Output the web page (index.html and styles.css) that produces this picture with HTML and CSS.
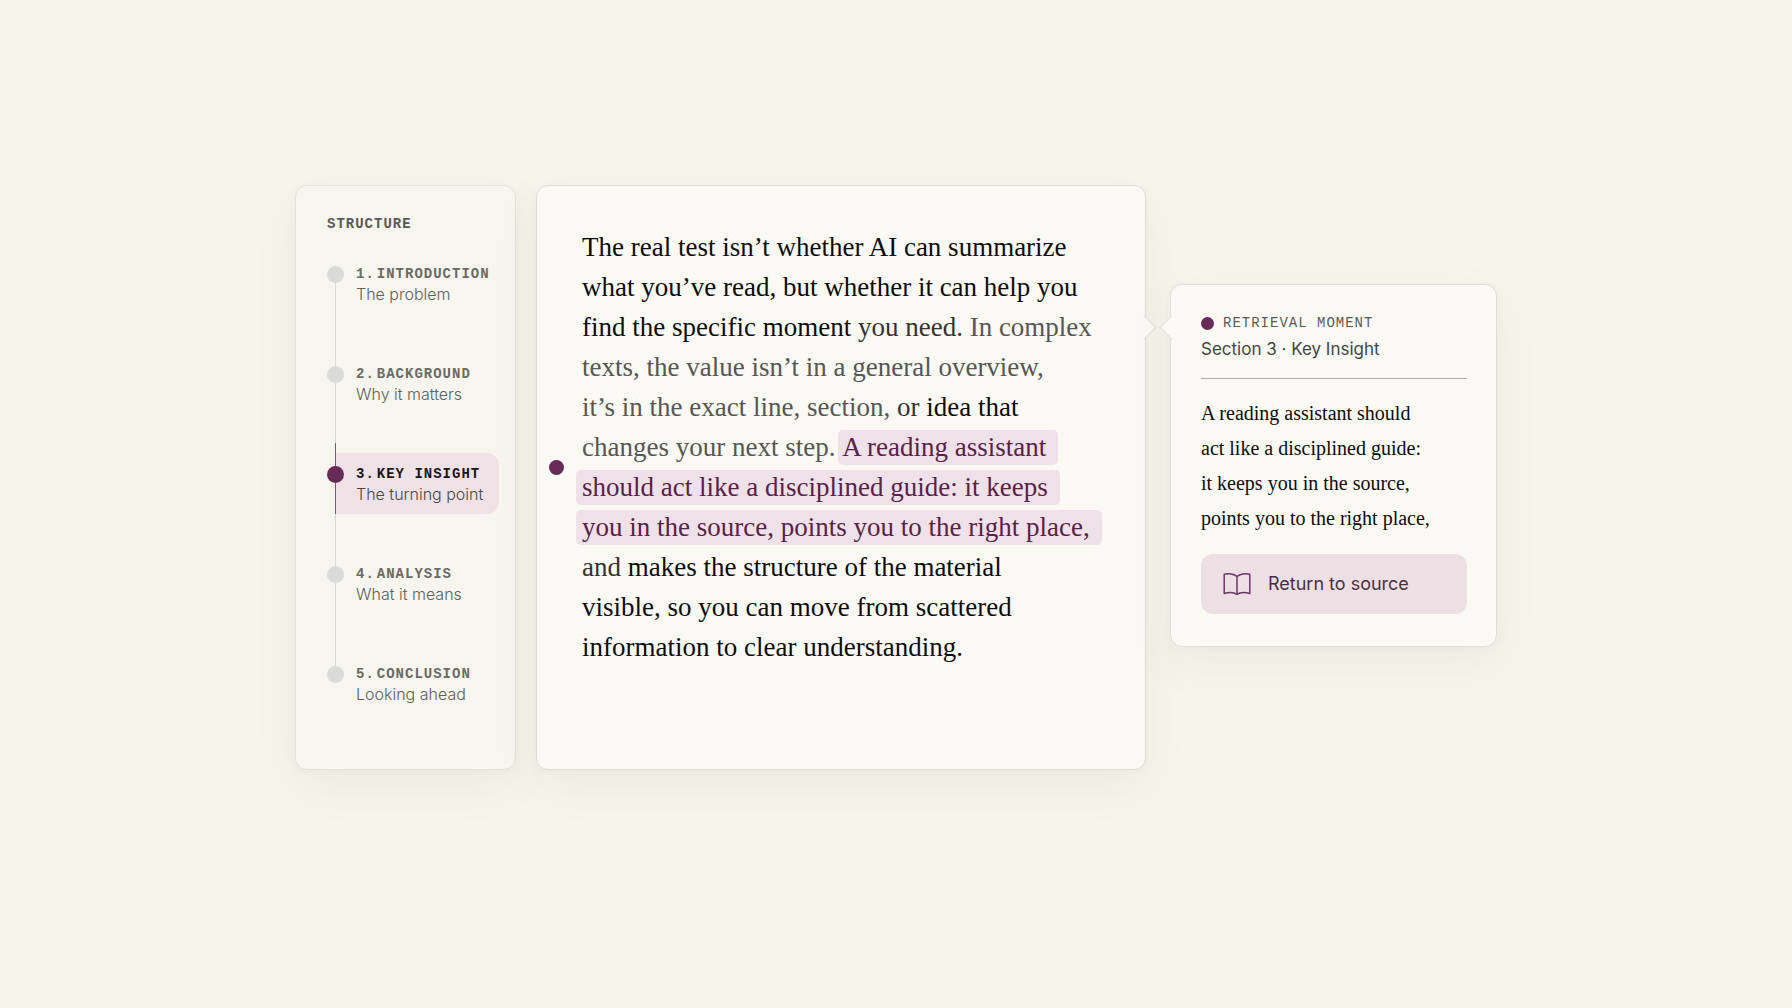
FILE: index.html
```
<!DOCTYPE html>
<html lang="en">
<head>
	<meta charset="UTF-8">
	<meta name="viewport" content="width=device-width, initial-scale=1">
	<title>Reading assistant</title>
	<link rel="stylesheet" href="styles.css">
</head>
<body>
	<main class="reader">
		<nav class="card outline">
			<h2 class="label ttl">STRUCTURE</h2>
			<ol class="steps">
				<li><a href="#s1"><span class="label"><span>1.</span><span>INTRODUCTION</span></span><span class="sub">The problem</span></a></li>
				<li><a href="#s2"><span class="label"><span>2.</span><span>BACKGROUND</span></span><span class="sub">Why it matters</span></a></li>
				<li class="active"><a href="#s3" aria-current="true"><span class="label"><span>3.</span><span>KEY INSIGHT</span></span><span class="sub">The turning point</span></a></li>
				<li><a href="#s4"><span class="label"><span>4.</span><span>ANALYSIS</span></span><span class="sub">What it means</span></a></li>
				<li><a href="#s5"><span class="label"><span>5.</span><span>CONCLUSION</span></span><span class="sub">Looking ahead</span></a></li>
			</ol>
		</nav>

		<article class="card page">
			<p>
				The real test isn’t whether AI can summarize<br>
				what you’ve read, but whether it can help you<br>
				find the specific moment <span class="mid">you need.</span> <span class="dim">In complex</span><br>
				<span class="dim">texts, the value isn’t in a general overview,</span><br>
				<span class="dim">it’s in the exact line, section,</span> <span class="mid">or</span> idea that<br>
				<span class="dim">changes your next step.</span> <mark>A reading assistant</mark><br>
				<mark class="full">should act like a disciplined guide: it keeps</mark><br>
				<mark class="full">you in the source, points you to the right place,</mark><br>
				<span class="mid">and</span> makes the structure of the material<br>
				visible, so you can move from scattered<br>
				information to clear understanding.
			</p>
			<span class="pin"></span>
		</article>

		<aside class="card moment">
			<h3 class="label">RETRIEVAL MOMENT</h3>
			<div class="where">Section 3 · Key Insight</div>
			<p class="quote">
				A reading assistant should<br>
				act like a disciplined guide:<br>
				it keeps you in the source,<br>
				points you to the right place,
			</p>
			<button type="button" class="return">
				<svg viewBox="0 0 28 24" aria-hidden="true">
					<path d="M14 4.5C11.500 1.800 5.500 1 1.200 2.300V21.500C5.500 20.300 11 20.300 14 22.500C17 20.300 22.500 20.300 26.800 21.500V2.300C22.500 1 16.500 1.800 14 4.500V22.500"/>
				</svg>
				Return to source
			</button>
		</aside>
	</main>
</body>
</html>
```
FILE: styles.css
```
* { box-sizing: border-box; }
body { margin: 0; background: #F6F5EC; color: #0C0C0C; font-family: Inter, "Liberation Sans", sans-serif; }

.reader { display: grid; grid-template-columns: 221px minmax(0, 610px) 331px; column-gap: 20px; justify-content: center;
	align-items: start; padding: 185px 24px 80px; }
.card { position: relative; border: 1px solid #DEDED8; border-radius: 12px; background: #FAF9F4;
	box-shadow: 0 16px 48px rgba(80,78,66,0.06), 0 2px 8px rgba(80,78,66,0.03); }
.label { margin: 0; font: 14px/20px "Liberation Mono", monospace; letter-spacing: 1px; color: #5A5A57; }

/* section list */
.outline { align-self: stretch; padding: 28px 16px 54px 31px; background: #F6F6EE; border-color: #E3E3DC; }
.ttl { font-weight: bold; }
.steps { position: relative; list-style: none; margin: 19px 0 0; padding: 0 0 0 8px; display: grid; row-gap: 39px; }
.steps:before { content: ""; position: absolute; left: 8px; top: 21px; bottom: 40px; width: 1px; background: #D9D9D4; }
.steps li { position: relative; }
.steps li:before { content: ""; position: absolute; z-index: 1; left: -8px; top: 13px; width: 17px; height: 17px; border-radius: 50%; background: #DADAD7; }
.steps a { display: block; padding: 11px 0 10px 21px; color: #60605E; text-decoration: none; white-space: nowrap; }
.steps .label { display: flex; column-gap: 2px; font-weight: bold; color: #6A6A67; }
.sub { display: block; font-size: 16px; line-height: 20px; font-weight: 300; }
.active a { background: #EEE2E7; border-radius: 0 12px 12px 0; color: #4A4749; }
.active a:before { content: ""; position: absolute; left: 0; top: -10px; bottom: 0; width: 1px; background: #8A4F7C; }
.steps .active:before { background: #682B58; }
.steps .active .label { color: #1B181A; }

/* text */
.page { padding: 41px 24px 102px 45px; }
.page p { margin: 0; font: 27px/40px "Liberation Serif", serif; white-space: nowrap; }
.dim { color: #565653; }
.mid { color: #333331; }
mark { margin-left: -4px; padding: 2px 12px 3px 4px; border-radius: 5px; background: #EEE1E7; color: #5A2149; }
mark.full { margin-left: -6px; padding-left: 6px; }
.pin { position: absolute; left: 12px; top: 274px; width: 15px; height: 15px; border-radius: 50%; background: #682B58; }

/* pointers between the page and the moment card */
.page:after,
.moment:before { content: ""; position: absolute; width: 16px; height: 16px; background: #FAF9F4; border: 1px solid #DEDED8; transform: rotate(45deg); }
.page:after { right: -8px; top: 133px; border-left: 0; border-bottom: 0; }
.moment:before { left: -8px; top: 34px; border-right: 0; border-top: 0; }

.moment { margin: 99px 0 0 4px; padding: 28px 29px 32px 30px; }
.moment .label { display: flex; align-items: center; column-gap: 9px; }
.moment h3.label { font-weight: normal; }
.moment .label:before { content: ""; width: 13px; height: 13px; border-radius: 50%; background: #682B58; }
.where { padding: 2px 0 15px; border-bottom: 1px solid #AEAEA9; font-size: 17px; line-height: 28px; color: #454543; }
.quote { margin: 17px 0 18px; font: 20px/35px "Liberation Serif", serif; }
.return { display: flex; align-items: center; column-gap: 17px; width: 100%; height: 60px; padding: 0 22px; border: 0; border-radius: 12px;
	background: #ECE0E5; color: #4A3043; font: 18px/24px Inter, "Liberation Sans", sans-serif; text-align: left; cursor: pointer; }
.return:hover { background: #E6D6DE; }
.return svg { width: 28px; height: 24px; fill: none; stroke: #6E3460; stroke-width: 1.500; stroke-linejoin: round; }
```
